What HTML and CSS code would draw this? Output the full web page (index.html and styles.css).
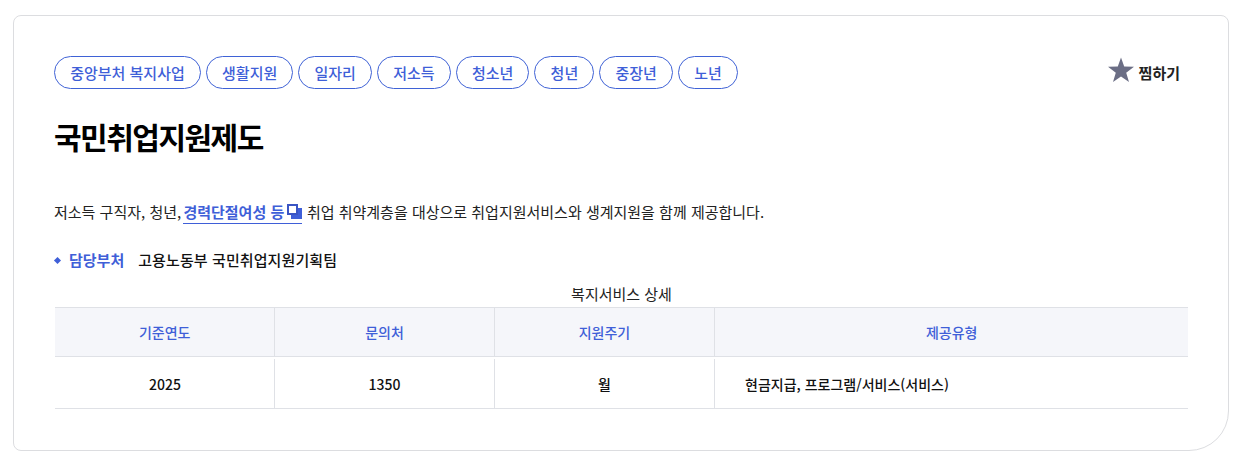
FILE: index.html
```html
<!DOCTYPE html>
<html lang="ko">
<head>
    <meta charset="UTF-8">
    <title>국민취업지원제도</title>
    <link rel="stylesheet" href="styles.css">
</head>
<body>
    <div class="card">
        <div class="top">
            <ul class="tags">
                <li>중앙부처 복지사업</li>
                <li>생활지원</li>
                <li>일자리</li>
                <li>저소득</li>
                <li>청소년</li>
                <li>청년</li>
                <li>중장년</li>
                <li>노년</li>
            </ul>
            <button class="fav">
                <svg width="26" height="26" viewBox="0 0 26 26"><path d="M13 .5l3.2 9 9.8.3-7.8 5.9 2.8 9.3-8-5.5-8 5.5 2.8-9.3L0 9.8l9.8-.3z" fill="#6b6e85"/></svg>
                <span>찜하기</span>
            </button>
        </div>
        <h1>국민취업지원제도</h1>
        <p class="desc">저소득 구직자, 청년, <a href="#">경력단절여성 등<svg width="15" height="15" viewBox="0 0 15 15"><path d="M4 4h11v11H4z" fill="#3f5fd8"/><path d="M1 1h9v9H1z" fill="#fff" stroke="#3a55c4" stroke-width="2"/></svg></a> 취업 취약계층을 대상으로 취업지원서비스와 생계지원을 함께 제공합니다.</p>
        <div class="dept"><span class="dot"></span><strong>담당부처</strong><span class="dept-name">고용노동부 국민취업지원기획팀</span></div>
        <table>
            <caption>복지서비스 상세</caption>
            <thead>
                <tr><th>기준연도</th><th>문의처</th><th>지원주기</th><th>제공유형</th></tr>
            </thead>
            <tbody>
                <tr><td>2025</td><td>1350</td><td>월</td><td class="left">현금지급, 프로그램/서비스(서비스)</td></tr>
            </tbody>
        </table>
    </div>
</body>
</html>
```

FILE: styles.css
```css
* {
    margin: 0;
    padding: 0;
    box-sizing: border-box;
}

body {
    font-family: "Noto Sans CJK KR", "Noto Sans", sans-serif;
    background-color: #fff;
    color: #111;
    padding: 15px 15px 15px 13px;
}

.card {
    width: 1216px;
    height: 436px;
    border: 1px solid #dcdde0;
    border-radius: 8px 8px 40px 8px;
    padding: 40px 40px 0;
}

.top {
    display: flex;
    justify-content: space-between;
    align-items: center;
    height: 33px;
}

.tags {
    display: flex;
    gap: 5px;
    list-style: none;
}

.tags li {
    height: 33px;
    line-height: 31px;
    padding: 0 15.15px;
    border: 1px solid #3f62d6;
    border-radius: 17px;
    font-size: 15px;
    font-weight: 500;
    color: #3f5fd8;
}

.fav {
    display: flex;
    align-items: center;
    gap: 5px;
    margin-right: 8px;
    margin-top: -5px;
    border: none;
    background: none;
    font: inherit;
    font-size: 15px;
    font-weight: 700;
    color: #222;
}

.fav span {
    margin-top: 4px;
}

h1 {
    margin-top: 25px;
    font-size: 30px;
    line-height: 44px;
    letter-spacing: -1.5px;
    font-weight: 700;
    color: #000;
}

.desc {
    margin-top: 40px;
    font-size: 15px;
    line-height: 28px;
    color: #222;
}

.desc a {
    display: inline-block;
    margin-left: -2px;
    margin-right: 0.5px;
    line-height: 23px;
    font-weight: 700;
    color: #3f5fd8;
    text-decoration: none;
    border-bottom: 1px solid #3f5fd8;
}

.desc a svg {
    margin-left: 3px;
    vertical-align: -1px;
}

.dept {
    display: flex;
    align-items: center;
    margin-top: 22px;
    font-size: 15px;
    line-height: 24px;
    font-weight: 500;
}

.dept .dot {
    width: 5px;
    height: 5px;
    margin-left: 1px;
    margin-right: 9px;
    background-color: #3f5fd8;
    transform: rotate(45deg);
}

.dept strong {
    margin-right: 14px;
    font-weight: 700;
    color: #3f5fd8;
}

.dept-name {
    letter-spacing: 0.1px;
}

table {
    width: 1133px;
    margin-top: 9px;
    margin-left: 1px;
    border-collapse: collapse;
    table-layout: fixed;
}

caption {
    font-size: 15px;
    line-height: 26px;
    color: #222;
}

th, td {
    padding-left: 1px;
    text-align: center;
    font-size: 14px;
}

th:nth-child(-n+3) {
    width: 220px;
}

th:first-child {
    width: 219px;
}

th {
    height: 49px;
    background-color: #f5f6fa;
    border-top: 1px solid #dfe1e6;
    border-bottom: 1px solid #dfe1e6;
    border-left: 1px solid #dfe1e6;
    font-weight: 500;
    color: #3f5fd8;
}

th:first-child {
    border-left: none;
}

td {
    height: 52px;
    padding-top: 2px;
    border-bottom: 1px solid #dfe1e6;
    font-weight: 500;
    background: linear-gradient(#dfe1e6, #dfe1e6) no-repeat left 0 top 2px / 1px 100%;
}

td:first-child {
    background: none;
}

td.left {
    padding-left: 31px;
    text-align: left;
}
```
